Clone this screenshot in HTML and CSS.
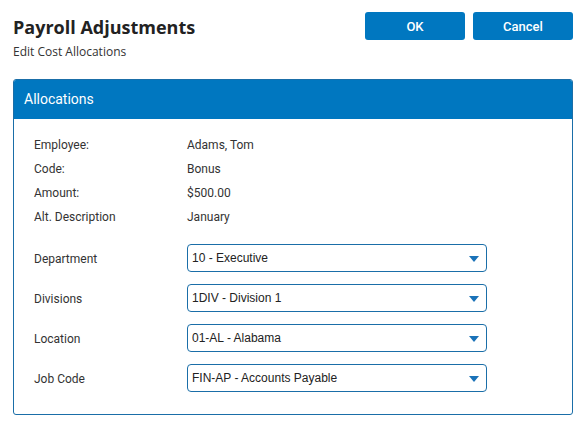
FILE: index.html
```html
<!DOCTYPE html>
<html>
<head>
<meta charset="utf-8">
<link rel="stylesheet" href="styles.css">
</head>
<body>
<div class="page">
  <div class="top">
    <div class="titles">
      <h1 class="title">Payroll Adjustments</h1>
      <div class="subtitle">Edit Cost Allocations</div>
    </div>
    <div class="actions">
      <button class="btn">OK</button>
      <button class="btn">Cancel</button>
    </div>
  </div>
  <div class="panel">
    <div class="panel-head">Allocations</div>
    <div class="panel-body">
      <div class="info">
        <div class="row"><span class="lbl">Employee:</span><span class="val">Adams, Tom</span></div>
        <div class="row"><span class="lbl">Code:</span><span class="val">Bonus</span></div>
        <div class="row"><span class="lbl">Amount:</span><span class="val">$500.00</span></div>
        <div class="row"><span class="lbl">Alt. Description</span><span class="val">January</span></div>
      </div>
      <div class="fields">
        <div class="field"><span class="lbl">Department</span><div class="select"><span>10 - Executive</span><svg class="caret" width="10" height="6" viewBox="0 0 10 6"><path d="M0 0H10L5 6Z"/></svg></div></div>
        <div class="field"><span class="lbl">Divisions</span><div class="select"><span>1DIV - Division 1</span><svg class="caret" width="10" height="6" viewBox="0 0 10 6"><path d="M0 0H10L5 6Z"/></svg></div></div>
        <div class="field"><span class="lbl">Location</span><div class="select"><span>01-AL - Alabama</span><svg class="caret" width="10" height="6" viewBox="0 0 10 6"><path d="M0 0H10L5 6Z"/></svg></div></div>
        <div class="field"><span class="lbl">Job Code</span><div class="select"><span>FIN-AP - Accounts Payable</span><svg class="caret" width="10" height="6" viewBox="0 0 10 6"><path d="M0 0H10L5 6Z"/></svg></div></div>
      </div>
    </div>
  </div>
</div>
</body>
</html>
```

FILE: styles.css
```css
* { box-sizing: border-box; }
html, body { margin: 0; padding: 0; background: #fff; }
.page { padding: 12px 13px 0 13px; width: 586px; }
.top { display: flex; justify-content: space-between; align-items: flex-start; height: 67px; }
.title { margin: 3px 0 0 0; font-family: "Open Sans", sans-serif; font-weight: 700; font-size: 18px; line-height: 25px; color: #222; }
.subtitle { font-family: "Open Sans", sans-serif; font-size: 12px; line-height: 16px; color: #333; margin-top: 4px; }
.actions { display: flex; gap: 8px; }
.btn { width: 100px; height: 28px; border: none; border-radius: 3px; background: #0077c0; color: #fff; font-family: Roboto, sans-serif; font-size: 13px; font-weight: 500; padding: 0; }
.panel { border: 1px solid #1a6ea8; border-radius: 3px; overflow: hidden; height: 336px; }
.panel-head { background: #0077c0; color: #fff; height: 39px; line-height: 38px; padding-left: 10px; font-family: Roboto, sans-serif; font-size: 14px; }
.panel-body { padding: 14px 20px 0 20px; }
.row { display: flex; height: 24px; align-items: center; font-family: Roboto, sans-serif; font-size: 12px; color: #333; }
.lbl { width: 153px; flex: none; font-family: Roboto, sans-serif; font-size: 12px; color: #333; }
.val { color: #333; }
.fields { margin-top: 15px; display: flex; flex-direction: column; gap: 12px; }
.field { display: flex; align-items: center; height: 28px; }
.field .lbl { margin-top: 1px; }
.select { width: 300px; height: 28px; border: 1px solid #1a6ea8; border-radius: 4px; display: flex; align-items: center; justify-content: space-between; padding: 0 7px 0 4px; font-family: "Liberation Sans", Arial, sans-serif; font-size: 12px; color: #222; }
.caret { fill: #1a72b8; margin-top: 1px; }
```
